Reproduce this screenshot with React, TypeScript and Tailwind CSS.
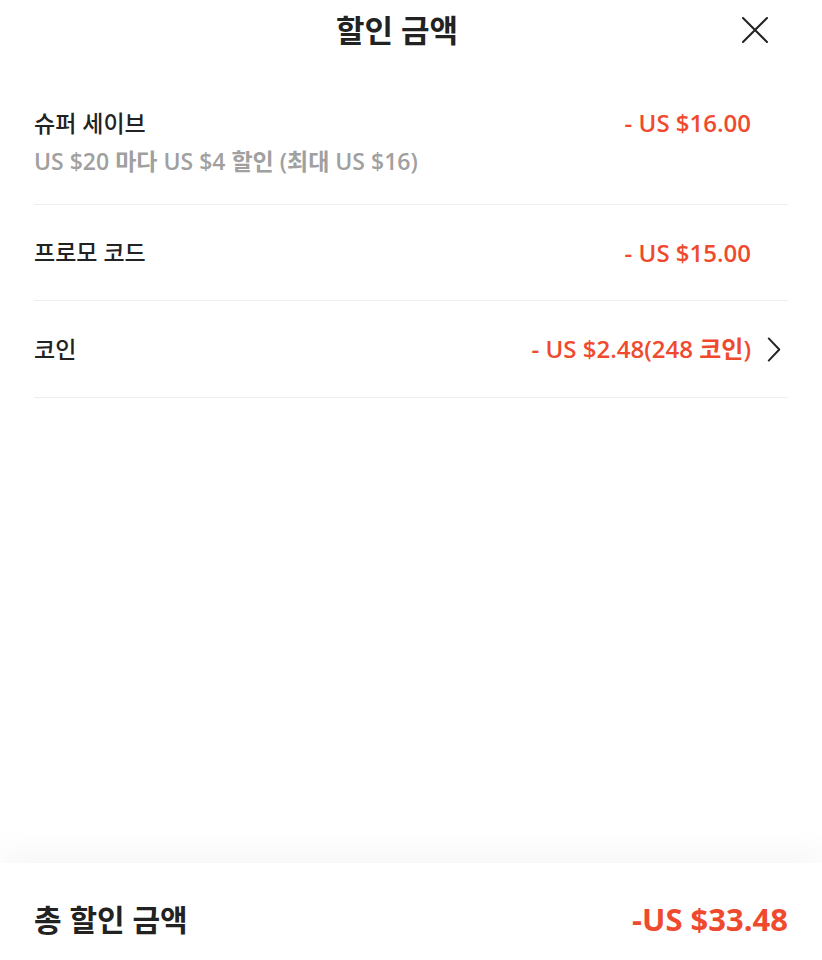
export default function App() {
  const font = { fontFamily: '"Open Sans", "Noto Sans CJK KR", sans-serif' };

  return (
    <div className="h-[960px] w-full bg-white flex flex-col text-[#222]" style={font}>
      {/* header */}
      <div className="relative h-[62px] flex items-start justify-center pt-[13px] pr-[28px]">
        <h1 className="text-[31px] font-bold leading-[34px]">할인 금액</h1>
        <button className="absolute right-[54px] top-[17px] w-[26px] h-[26px]">
          <svg viewBox="0 0 26 26" className="w-[26px] h-[26px]" fill="none" stroke="#222" strokeWidth="2" strokeLinecap="round">
            <path d="M1 1L25 25M25 1L1 25" />
          </svg>
        </button>
      </div>

      {/* rows */}
      <div className="flex-1 px-[34px]">
        <div className="flex justify-between pt-[46px] pb-[28px] border-b border-[#efefef]">
          <div className="flex flex-col gap-[8px]">
            <span className="text-[23px] font-medium leading-[30px]">슈퍼 세이브</span>
            <span className="text-[23px] font-semibold leading-[30px] text-[#a0a0a0]">
              US $20 마다 US $4 할인 (최대 US $16)
            </span>
          </div>
          <div className="flex items-start">
            <span className="text-[24px] font-semibold leading-[30px] text-[#f04a2e]">- US $16.00</span>
            <span className="w-[37px]" />
          </div>
        </div>

        <div className="flex justify-between items-center h-[96px] border-b border-[#efefef]">
          <span className="text-[23px] font-medium">프로모 코드</span>
          <div className="flex items-center">
            <span className="text-[24px] font-semibold text-[#f04a2e]">- US $15.00</span>
            <span className="w-[37px]" />
          </div>
        </div>

        <div className="flex justify-between items-center h-[97px] border-b border-[#efefef]">
          <span className="text-[23px] font-medium">코인</span>
          <div className="flex items-center">
            <span className="text-[24px] font-semibold text-[#f04a2e]">- US $2.48(248 코인)</span>
            <span className="w-[37px] flex justify-end pr-[7px]">
              <svg viewBox="0 0 14 26" className="w-[14px] h-[25px]" fill="none" stroke="#222" strokeWidth="2" strokeLinecap="round" strokeLinejoin="round">
                <path d="M1.5 1.5L12.5 13L1.5 24.5" />
              </svg>
            </span>
          </div>
        </div>
      </div>

      {/* footer */}
      <div className="h-[97px] px-[34px] pt-[16px] flex items-center justify-between bg-white shadow-[0_-14px_30px_rgba(0,0,0,0.035)]">
        <span className="text-[30px] font-bold">총 할인 금액</span>
        <span className="text-[31px] font-bold text-[#f04a2e]">-US $33.48</span>
      </div>
    </div>
  );
}
